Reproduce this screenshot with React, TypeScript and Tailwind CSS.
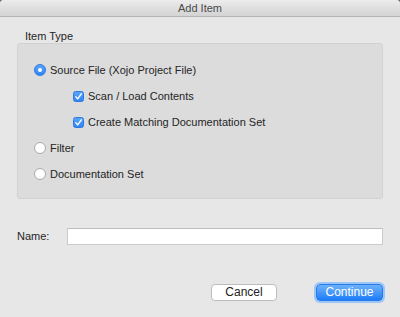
import React from 'react';

const font = "font-['Liberation_Sans',Arial,sans-serif]";

const Radio: React.FC<{ checked?: boolean }> = ({ checked }) =>
  checked ? (
    <span className="w-[12px] h-[12px] rounded-full bg-gradient-to-b from-[#5aa4fa] to-[#2f84f5] border border-[#2a78e0] flex items-center justify-center shrink-0">
      <span className="w-[4px] h-[4px] rounded-full bg-white" />
    </span>
  ) : (
    <span className="w-[12px] h-[12px] rounded-full bg-white border border-[#a9a9a9] shrink-0" />
  );

const Checkbox: React.FC = () => (
  <span className="w-[11px] h-[11px] rounded-[2.5px] bg-gradient-to-b from-[#5aa4fa] to-[#2f84f5] border border-[#2a78e0] flex items-center justify-center shrink-0">
    <svg width="9" height="9" viewBox="0 0 9 9" fill="none">
      <path d="M1.8 4.8 L3.7 6.9 L7.3 1.8" stroke="white" strokeWidth="1.4" strokeLinecap="round" strokeLinejoin="round" />
    </svg>
  </span>
);

export default function App() {
  return (
    <div className={`w-[400px] h-[317px] bg-[#6a6a6a] ${font} text-[11px] leading-[13px] text-[#252525]`}>
      <div className="w-full h-full rounded-t-[4px] overflow-hidden bg-[#e7e7e7] flex flex-col">
        {/* Title bar */}
        <div className="h-[17px] shrink-0 bg-gradient-to-b from-[#ececec] to-[#d3d3d3] border-b border-[#b4b4b4] flex items-center justify-center text-[#4a4a4a]">
          Add Item
        </div>

        {/* Item Type group */}
        <div className="px-[17px]">
          <div className="pl-[8px] pt-[13px] h-[26px] flex items-center">Item Type</div>
          <div className="h-[156px] rounded-[3px] bg-[#dcdcdc] border border-[#d2d2d2] pt-[13px] pl-[16px]">
            <div className="h-[26px] flex items-center gap-[4px]">
              <Radio checked />
              <span>Source File (Xojo Project File)</span>
            </div>
            <div className="h-[26px] flex items-center gap-[4px] pl-[39px]">
              <Checkbox />
              <span>Scan / Load Contents</span>
            </div>
            <div className="h-[26px] flex items-center gap-[4px] pl-[39px]">
              <Checkbox />
              <span>Create Matching Documentation Set</span>
            </div>
            <div className="h-[26px] flex items-center gap-[4px]">
              <Radio />
              <span>Filter</span>
            </div>
            <div className="h-[26px] flex items-center gap-[4px]">
              <Radio />
              <span>Documentation Set</span>
            </div>
          </div>
        </div>

        {/* Name row */}
        <div className="mt-[29px] px-[17px] flex items-center h-[17px]">
          <span className="w-[50px]">Name:</span>
          <div className="flex-1 h-[17px] bg-white border border-[#cbcbcb] border-t-[#bdbdbd]" />
        </div>

        {/* Buttons */}
        <div className="mt-[39px] pr-[17px] flex justify-end items-center gap-[39px]">
          <button className="w-[66px] h-[17px] rounded-[4px] bg-white border border-[#bdbdbd] text-[12px] leading-[15px] text-[#222]">
            Cancel
          </button>
          <button className="w-[67px] h-[17px] rounded-[4px] bg-gradient-to-b from-[#6cb1fb] to-[#1b7cf7] border border-[#2a79e8] text-white text-[12px] leading-[15px] ring-2 ring-[#9cc6f6]">
            Continue
          </button>
        </div>
      </div>
    </div>
  );
}
